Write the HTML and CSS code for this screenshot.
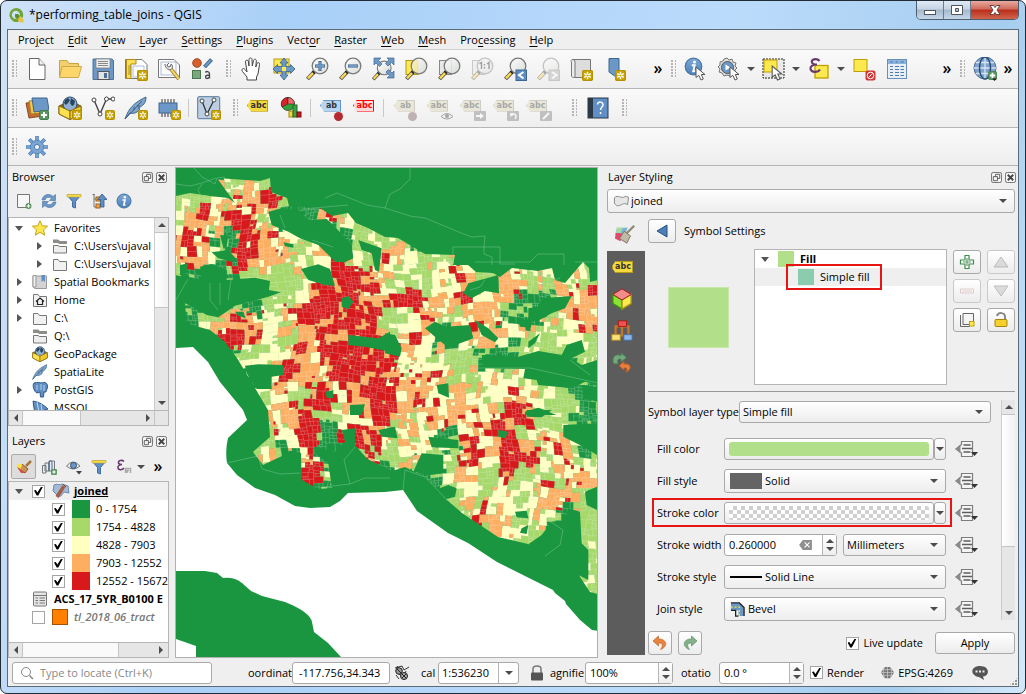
FILE: index.html
```html
<!DOCTYPE html>
<html lang="en">
<head>
<meta charset="utf-8">
<title>*performing_table_joins - QGIS</title>
<link rel="stylesheet" href="styles.css">
</head>
<body>
<svg class="defs" aria-hidden="true">
  <defs>
    <linearGradient id="lens" x1="0" y1="0" x2="1" y2="1"><stop offset="0" stop-color="#fff"/><stop offset="1" stop-color="#d3d7d0"/></linearGradient>
    <linearGradient id="blue" x1="0" y1="0" x2="0" y2="1"><stop offset="0" stop-color="#7fa9d6"/><stop offset="1" stop-color="#4a7fb8"/></linearGradient>
    <symbol id="i-new" viewBox="0 0 10 10"><rect x=".5" y=".5" width="9" height="9" rx="1" fill="#c8a300" stroke="#b39100"/><path d="M5 1.500V8.500M2 3.200 8 6.800M8 3.200 2 6.800" stroke="#fff" stroke-width="1.300"/><circle cx="5" cy="5" r="1" fill="#c8a300"/></symbol>
    <symbol id="i-plus" viewBox="0 0 10 10"><rect x=".5" y=".5" width="9" height="9" rx="1.500" fill="#5a9461" stroke="#45804c"/><path d="M5 2V8M2 5H8" stroke="#fff" stroke-width="2"/></symbol>
    <symbol id="i-mag" viewBox="0 0 24 24"><path d="M9.500 14.500 2.500 22" stroke="#4c4c4c" stroke-width="4"/><path d="M9 15 3 21.300" stroke="#fcd94f" stroke-width="2.400"/><path d="M9.500 14.500 8 16" stroke="#222" stroke-width="3.500"/><circle cx="15" cy="9" r="7.800" fill="url(#lens)" fill-opacity=".85" stroke="#7a7a7a" stroke-width="1.300"/></symbol>
    <symbol id="i-cursor" viewBox="0 0 12 15"><path d="M1 1V11.500L3.800 9.300 6 14 8.300 13 6.300 8.500H10Z" fill="#fff" stroke="#555"/></symbol>
    <symbol id="i-funnel" viewBox="0 0 16 16"><path d="M1 2H15L9.500 8.500V15L6.500 14V8.500Z" fill="#5f8fc4" stroke="#416f9f"/><path d="M1 1.500H15V4H1Z" fill="#f8dc4a" stroke="#c8a832" stroke-width=".6"/></symbol>
    <symbol id="i-info" viewBox="0 0 16 16"><circle cx="8" cy="8" r="7" fill="url(#blue)" stroke="#4674a3"/><circle cx="8.800" cy="4.200" r="1.300" fill="#fff"/><path d="M6.500 7H9L7.800 12H9.500" fill="none" stroke="#fff" stroke-width="1.600"/></symbol>
    <symbol id="i-folder" viewBox="0 0 16 16"><path d="M1.500 3.500V14.500H14.500V5.500H7.500L6 3.500Z" fill="#f1f1f1" stroke="#777"/></symbol>
    <symbol id="i-folder2" viewBox="0 0 16 16"><path d="M1.500 7.500V15H14.500V8.500H7.500L6 7.500Z" fill="#eee" stroke="#777"/><path d="M1 1.500H6L8 3H15V6H7L6 5H1Z" fill="#8c8c88"/></symbol>
    <symbol id="i-globox" viewBox="0 0 24 24"><path d="M1 10 12 5 23 10V18L12 23.500 1 18Z" fill="#8f7312" stroke="#6d560c"/><circle cx="12" cy="8" r="7" fill="#8fb0d2" stroke="#294969"/><path d="M7 4 10 2 12 4 10 7 8 9 6 7ZM13 2 17 5 16 9 14 10 12 7Z" fill="#29445f"/><path d="M1 10 12 15V23.500L1 18Z" fill="#fbe04f" stroke="#8a6c12"/><path d="M12 15V23.500L23 18V10Z" fill="#f0c92c" stroke="#8a6c12"/></symbol>
    <symbol id="i-feather" viewBox="0 0 24 24"><path d="M1 23C4 15 7 8 22 1 22 7 19 10 14 12 19 12 12 19 6 17Z" fill="#7fa5cc" stroke="#3d658d"/><path d="M1 23 18 5M10 11 10 14M13 10H16" fill="none" stroke="#2d4b69" stroke-width=".8"/></symbol>
    <symbol id="i-float" viewBox="0 0 12 12"><rect x=".5" y=".5" width="11" height="11" rx="2" fill="#f5f5f5" stroke="#666"/><path d="M5 5V2.500H9.500V7H7M2.500 5H7V9.500H2.500Z" fill="none" stroke="#555"/></symbol>
    <symbol id="i-close" viewBox="0 0 12 12"><rect x=".5" y=".5" width="11" height="11" rx="2" fill="#f5f5f5" stroke="#666"/><path d="M3 3 9 9M9 3 3 9" stroke="#444" stroke-width="2"/></symbol>
    <symbol id="i-dd" viewBox="0 0 24 18"><path d="M6.500 1.500H17.500V16.500H6.500V13L1 9 6.500 4.500Z" fill="#f5f5f5" stroke="#7d7d7d" stroke-width="1.200"/><path d="M5.500 4.500V13.500L.5 9Z" fill="#8b8b8b"/><path d="M8.500 5H15.500M7 8.500H17M8.500 12H15.500" stroke="#5d5d5d" stroke-width="1.300"/><path d="M16 12H23L19.500 16Z" fill="#333"/></symbol>
    <symbol id="i-undo" viewBox="0 0 16 16"><path d="M6.500 1 1 6 6.500 11V8C11 7.500 11.500 11 8.500 14.500 16 12 15.500 4 6.500 4Z" fill="#e8823c" stroke="#c06529" stroke-width=".7"/></symbol>
  </defs>
</svg>

<div class="window">
  <header class="titlebar">
    <svg class="s16" viewBox="0 0 16 16"><path d="M8 1A7 7 0 1 0 11 14.500L9.500 11.500A4 4 0 1 1 11.700 9L14.500 11A7 7 0 0 0 8 1Z" fill="#6fa637"/><path d="M7 7H10L15.500 12.500V15.500H12.500L7 10Z" fill="#e6c13a"/><path d="M7 7H10L12 9 9.500 12.500 7 10Z" fill="#5a9132"/></svg>
    <h1>*performing_table_joins - QGIS</h1>
    <div class="winbtns">
      <button aria-label="Minimize"><svg viewBox="0 0 14 12"><rect x="1.500" y="6.500" width="11" height="4" fill="#fff" stroke="#50555e"/></svg></button>
      <button aria-label="Maximize"><svg viewBox="0 0 14 12"><path d="M1.500 1.500H12.500V10.500H1.500ZM5.500 4.500H8.500V7.500H5.500Z" fill="#fff" fill-rule="evenodd" stroke="#50555e"/></svg></button>
      <button class="close" aria-label="Close"><svg viewBox="0 0 14 12"><path d="M2 1.500H5.500L7 3.500 8.500 1.500H12L9 6 12 10.500H8.500L7 8.500 5.500 10.500H2L5 6Z" fill="#fff" stroke="#5e4444"/></svg></button>
    </div>
  </header>

  <div class="client">
    <nav class="menubar">
      <button>Pro<u>j</u>ect</button><button><u>E</u>dit</button><button><u>V</u>iew</button><button><u>L</u>ayer</button><button><u>S</u>ettings</button><button><u>P</u>lugins</button><button>Vect<u>o</u>r</button><button><u>R</u>aster</button><button><u>W</u>eb</button><button><u>M</u>esh</button><button>Pro<u>c</u>essing</button><button><u>H</u>elp</button>
    </nav>

    <div class="toolbar">
      <i class="grip"></i>
      <button aria-label="New project"><svg viewBox="0 0 24 24"><path d="M4.500 1.500H14L20 8V22.500H4.500Z" fill="#fff" stroke="#666"/><path d="M14 1.500V8H20" fill="#eee" stroke="#666"/></svg></button>
      <button aria-label="Open project"><svg viewBox="0 0 24 24"><path d="M1.500 20V3.500H9L11 6.500H20.500V9" fill="#f2d06b" stroke="#c9a443"/><path d="M1.500 20.500 4 9.500H23.500L20.500 20.500Z" fill="#fcd66c" stroke="#cfa84a"/></svg></button>
      <button aria-label="Save project"><svg viewBox="0 0 24 24"><path d="M2 2H21L22.500 3.500V22.500H2Z" fill="#6c98c8" stroke="#49719c"/><rect x="5" y="2" width="14" height="9" fill="#eee" stroke="#777" stroke-width=".7"/><path d="M7 4.500H17M7 6.500H17M7 8.500H17" stroke="#888"/><rect x="7" y="14.500" width="11" height="8" fill="#e3e3e3" stroke="#555"/><rect x="13" y="16" width="3" height="5" fill="#496f9a"/></svg></button>
      <button aria-label="New print layout"><svg viewBox="0 0 24 24"><path d="M1.500 2.500H18L23 7.500V21.500H1.500Z" fill="#fff" stroke="#777"/><path d="M2.500 2.500H12V7H7V21.500H2.500Z" fill="#f8dd57" stroke="#b18b16"/><path d="M4 9H7M4 11H7M4 13H7M4 15H7M4 17H7" stroke="#8a6d0c" stroke-width=".7"/><path d="M9 9H20V20H9Z" fill="#fff" stroke="#99aad0" stroke-width=".8"/><use href="#i-new" x="13" y="13" width="11" height="11"/></svg></button>
      <button aria-label="Layout manager"><svg viewBox="0 0 24 24"><path d="M1.500 2.500H17L22.500 8V20.500H1.500Z" fill="#fff" stroke="#777"/><rect x="4" y="5" width="15" height="13" fill="#f9fbff" stroke="#9eabc8" stroke-width=".8"/><path d="M13 11 22 22" stroke="#9a7a2a" stroke-width="3.600"/><path d="M13 11 22 22" stroke="#f2d469" stroke-width="2"/><path d="M8 7C8 10 10 13 13.500 12.500 16 12 16 8 14 7L13.500 9.500 11 10 10 8 12 6" fill="#eee" stroke="#666"/></svg></button>
      <button aria-label="Style manager"><svg viewBox="0 0 24 24"><circle cx="7" cy="6" r="4.300" fill="#d75f2d" stroke="#a44920"/><path d="M14.500 10 21.500 2.500" stroke="#41658a" stroke-width="4"/><path d="M15 9.500 21 3" stroke="#6c98c8" stroke-width="2"/><rect x="2.500" y="13.500" width="8" height="8" fill="#7ba77d" stroke="#4a754d"/><path d="M15.500 15.500C16 14 19.500 14 19.500 17V21.500M19.500 18C16 18 15.500 19 15.500 20 15.500 22 18 22 19.500 20" fill="none" stroke="#444" stroke-width="1.300"/></svg></button>
      <i class="grip mid"></i>
      <button aria-label="Pan"><svg viewBox="0 0 24 24"><path d="M8 23V20L3.500 14.500C2 12 4.500 10.500 6 12.500L8 15 6.500 5C6 3 9 2.500 9.300 4.500L10 9 10 2.500C10 .5 13 .5 13 2.500L13.300 9 14.500 3.500C15 1.500 17.500 2 17.300 4L16.800 10 18 6.500C19 5 21 5.500 20.500 7.500L19 17 17.500 20V23Z" fill="#fff" stroke="#444"/></svg></button>
      <button aria-label="Pan to selection"><svg viewBox="0 0 24 24"><rect x="2" y="2" width="15" height="14" fill="#fce94f" stroke="#b39a12"/><path d="M12 1 16 6H14V9.500H18.500V7.500L23 12 18.500 16.500V14.500H14V18H16L12 23 8 18H10V14.500H5.500V16.500L1 12 5.500 7.500V9.500H10V6H8Z" fill="#6c98c8" stroke="#365f89" stroke-width=".8"/><rect x="10" y="10" width="4" height="4" fill="#fce94f"/></svg></button>
      <button aria-label="Zoom in"><svg viewBox="0 0 24 24"><use href="#i-mag"/><path d="M15 4V14M10 9H20" stroke="#31557a" stroke-width="3"/><path d="M15 4.500V13.500M10.500 9H19.500" stroke="#6d9acb" stroke-width="1.800"/></svg></button>
      <button aria-label="Zoom out"><svg viewBox="0 0 24 24"><use href="#i-mag"/><path d="M10 9H20" stroke="#31557a" stroke-width="3"/><path d="M10.500 9H19.500" stroke="#6d9acb" stroke-width="1.800"/></svg></button>
      <button aria-label="Zoom full"><svg viewBox="0 0 24 24"><g transform="translate(0 3) scale(.88)"><use href="#i-mag" width="24" height="24"/></g><path d="M3 1H10L7.500 3.500 11 7 8.500 9.500 5 6 3 8ZM16 1H23V8L20.500 5.500 17 9 14.500 6.500 18 3ZM23 14V21H16L18.500 18.500 15 15 17.500 12.500 21 16Z" fill="#6c98c8" stroke="#3f678f" stroke-width=".7"/></svg></button>
      <button aria-label="Zoom to selection"><svg viewBox="0 0 24 24"><rect x="2" y="3.500" width="12" height="14" fill="#fce94f" stroke="#b39a12"/><use href="#i-mag"/><path d="M9 5V14L14 16V3Z" fill="#fce94f" opacity=".35"/></svg></button>
      <button aria-label="Zoom to layer"><svg viewBox="0 0 24 24"><rect x="2.500" y="3.500" width="12" height="14" fill="#e8e8e8" stroke="#888"/><use href="#i-mag"/></svg></button>
      <button aria-label="Zoom to native resolution" disabled><svg viewBox="0 0 24 24"><rect x="2.500" y="3.500" width="12" height="14" fill="#e8e8e8" stroke="#888"/><use href="#i-mag"/><path d="M9.500 7 11.500 5.500V12M17 7 19 5.500V12M14.500 7V8.500M14.500 10V11.500" fill="none" stroke="#222" stroke-width="1.400"/></svg></button>
      <button aria-label="Zoom last"><svg viewBox="0 0 24 24"><use href="#i-mag"/><rect x="13" y="13" width="10.500" height="10.500" fill="#5d8cc0" stroke="#3b6795"/><path d="M20.500 15 16 18 20.500 21.500" fill="none" stroke="#fff" stroke-width="2"/></svg></button>
      <button aria-label="Zoom next" disabled><svg viewBox="0 0 24 24"><use href="#i-mag"/><rect x="13" y="13" width="10.500" height="10.500" fill="#aaa" stroke="#888"/><path d="M16 15 20.500 18 16 21.500" fill="none" stroke="#fff" stroke-width="2"/></svg></button>
      <button aria-label="New map view"><svg viewBox="0 0 24 24"><path d="M5 2.500H21.500V20.500H5Z" fill="#ddd" stroke="#777"/><path d="M5 2.500C2 2 1.500 4 2.500 5V19C3 21 6 21 6 19V5C6 3 5 2.500 3.500 3" fill="#eee" stroke="#777"/><use href="#i-new" x="13" y="13" width="11" height="11"/></svg></button>
      <button class="push" aria-label="New bookmark"><svg viewBox="0 0 24 24"><path d="M3 1.500H13V22L8 18.500 3 15Z" fill="#6c98c8" stroke="#3f678f"/><use href="#i-new" x="9" y="13" width="11" height="11"/></svg></button>
      <button class="more" aria-label="More">»</button>
      <i class="grip sec"></i>
      <button aria-label="Identify"><svg viewBox="0 0 24 24"><use href="#i-info" x="0" y="0" width="19" height="19"/><use href="#i-cursor" x="11" y="9" width="12" height="15"/></svg></button>
      <button aria-label="Run action"><svg viewBox="0 0 24 24"><path d="M10 1 12 3 15 2 16 5 19 6 18 9 20 11 18 13 18 16 15 17 13 19 10 18 7 19 5 16 2 15 3 12 1 10 3 8 3 5 6 4 7 2Z" fill="#ddd" stroke="#777"/><circle cx="10.500" cy="10.500" r="6" fill="#6c98c8" stroke="#555"/><path d="M8.500 7.500 13.500 10.500 8.500 13.500Z" fill="#fff"/><use href="#i-cursor" x="12" y="9" width="12" height="15"/></svg></button>
      <b class="tri"></b>
      <button aria-label="Select features"><svg viewBox="0 0 24 24"><rect x="1" y="2" width="21" height="19" fill="#ddd" fill-opacity=".5" stroke="#222" stroke-dasharray="2 1"/><rect x="2" y="3" width="13" height="12" fill="#fce94f" stroke="#c0a000"/><use href="#i-cursor" x="9" y="8" width="13" height="16"/></svg></button>
      <b class="tri"></b>
      <button aria-label="Select by expression"><svg viewBox="0 0 24 24"><rect x="8" y="8.500" width="13" height="12.500" fill="#fce94f" stroke="#c0a000" stroke-width="1.300"/><path d="M12.500 4C10 1 3.500 2 5 5.500 5.500 7 8 7.500 10 7.500 6 7.500 3 9 3.500 12 4.500 16 11 15.500 13 12.500" fill="none" stroke="#6a376e" stroke-width="2.200"/></svg></button>
      <b class="tri"></b>
      <button aria-label="Deselect"><svg viewBox="0 0 24 24"><rect x="2" y="2.500" width="13" height="12" fill="#fce94f" stroke="#c0a000"/><rect x="13.500" y="13.500" width="10" height="10" rx="2" fill="#d73636"/><circle cx="18.500" cy="18.500" r="3.300" fill="none" stroke="#fff"/><path d="M16.500 20.500 20.500 16.500" stroke="#fff"/></svg></button>
      <button aria-label="Attribute table"><svg viewBox="0 0 24 24"><rect x="2.500" y="2.500" width="19" height="19" fill="#e9eff6" stroke="#6590bd"/><path d="M3 3H21V7H3Z" fill="#8fb4dc"/><path d="M5 5H8M10.500 5H13M15.500 5H19M5 9.500H8M10 9.500H14M15.500 9.500H19M5 12.500H8M10 12.500H14M15.500 12.500H19M5 15.500H8M10 15.500H14M15.500 15.500H19M5 18.500H8M10 18.500H14M15.500 18.500H19" stroke="#4d7bab"/></svg></button>
      <button class="more far" aria-label="More">»</button>
      <i class="grip sec"></i>
      <button aria-label="Add web layer"><svg viewBox="0 0 24 24"><circle cx="12" cy="11" r="11" fill="#7fa3cb" stroke="#4b7099"/><path d="M12 0V22M1 11H23M3 5.500H21M3 16.500H21" stroke="#d7e4f3" stroke-width="1.300"/><ellipse cx="12" cy="11" rx="5.500" ry="11" fill="none" stroke="#294e78" stroke-width="1.500"/><use href="#i-plus" x="15" y="14" width="9" height="9"/><path d="M19 21.500H24L21.500 24Z" fill="#222"/></svg></button>
      <button class="more edge" aria-label="More">»</button>
    </div>

    <div class="toolbar">
      <i class="grip"></i>
      <button aria-label="Data source manager"><svg viewBox="0 0 24 24"><path d="M1 7 14 6 18 20 4 22Z" fill="#c26c33" stroke="#8a4a22"/><path d="M4 5 16 4 19 17 6 18Z" fill="#f2c64a" stroke="#a68018"/><path d="M7 2 22 2 24 14 9 16Z" fill="#6c98c8" stroke="#41658a"/><use href="#i-plus" x="14" y="14" width="10" height="10"/></svg></button>
      <button aria-label="New GeoPackage layer"><svg viewBox="0 0 24 24"><use href="#i-globox"/><use href="#i-new" x="14" y="14" width="10" height="10"/></svg></button>
      <button aria-label="New shapefile"><svg viewBox="0 0 24 24"><path d="M3 4 9 18 15.500 3 21 3" fill="none" stroke="#444" stroke-width="1.400"/><g fill="#fff" stroke="#444"><circle cx="3" cy="4" r="2"/><circle cx="9" cy="18" r="2"/><circle cx="15.500" cy="3" r="2"/><circle cx="22" cy="3" r="2"/></g><use href="#i-new" x="14" y="14" width="10" height="10"/></svg></button>
      <button aria-label="New SpatiaLite layer"><svg viewBox="0 0 24 24"><use href="#i-feather"/><use href="#i-new" x="14" y="14" width="10" height="10"/></svg></button>
      <button aria-label="New memory layer"><svg viewBox="0 0 24 24"><path d="M5 3V21M8 3V21M11 3V21M14 3V21M17 3V21" stroke="#333"/><rect x="2" y="7" width="18" height="10" fill="#6c98c8" stroke="#3e658e"/><use href="#i-new" x="14" y="14" width="10" height="10"/></svg></button>
      <i class="sep"></i>
      <button aria-label="New virtual layer"><svg viewBox="0 0 24 24"><rect x=".7" y=".7" width="22" height="22" rx="1" fill="#bccfe2" stroke="#56789b"/><path d="M5 5 10 18 17 4" fill="none" stroke="#333" stroke-width="1.300"/><g fill="#fff" stroke="#444"><circle cx="5" cy="5" r="2"/><circle cx="10" cy="18" r="2"/><circle cx="17" cy="4" r="2"/></g><use href="#i-new" x="14" y="14" width="10" height="10"/></svg></button>
      <i class="grip mid"></i>
      <button aria-label="Layer labeling options"><span class="tag">abc</span></button>
      <button aria-label="Diagram options"><svg viewBox="0 0 24 24"><circle cx="9" cy="8" r="6.500" fill="#31a33a" stroke="#222" stroke-width=".7"/><path d="M9 8V1.500A6.500 6.500 0 0 0 3 11Z" fill="#d8232a" stroke="#222" stroke-width=".5"/><path d="M9 8 15.500 8A6.500 6.500 0 0 0 9 1.500Z" fill="#f06a6a" stroke="#222" stroke-width=".5"/><rect x="10" y="15" width="4" height="6" fill="#f5d93a" stroke="#a78710"/><rect x="14" y="9" width="4" height="12" fill="#3ca441" stroke="#26692a"/><rect x="18" y="16" width="4" height="5" fill="#bf1a1e" stroke="#7d0d10"/></svg></button>
      <i class="sep"></i>
      <button aria-label="Highlight pinned labels"><span class="tag blue pin">ab</span></button>
      <button aria-label="Toggle unplaced labels"><span class="tag red">abc</span></button>
      <i class="sep wide"></i>
      <button aria-label="Pin labels" disabled><span class="tag gray pin">ab</span></button>
      <button aria-label="Show or hide labels" disabled><span class="tag gray">abc</span><svg class="mini" viewBox="0 0 12 9"><path d="M0 5Q6-1 12 5 6 10 0 5Z" fill="#eee" stroke="#333"/><circle cx="6" cy="4.500" r="2" fill="#333"/></svg></button>
      <button aria-label="Move label" disabled><span class="tag gray">abc</span><svg class="mini" viewBox="0 0 12 10"><rect width="12" height="10" rx="1" fill="#777"/><path d="M2 4H6V2L10 5 6 8V6H2Z" fill="#fff"/></svg></button>
      <button aria-label="Rotate label" disabled><span class="tag gray">abc</span><svg class="mini" viewBox="0 0 12 10"><rect width="12" height="10" rx="1" fill="#777"/><path d="M8 8C11 4 6 1 4 4V2M4 4H6" fill="none" stroke="#fff" stroke-width="1.500"/></svg></button>
      <button aria-label="Change label" disabled><span class="tag gray">abc</span><svg class="mini" viewBox="0 0 12 10"><rect width="12" height="10" rx="1" fill="#777"/><path d="M3 8 9 2" stroke="#fff" stroke-width="2"/></svg></button>
      <i class="grip help"></i>
      <button aria-label="Help"><svg viewBox="0 0 24 24"><rect x="2" y="2" width="20" height="20" fill="#5f8fc4" stroke="#2b3946"/><rect x="2" y="2" width="5" height="20" fill="#2b3946"/><path d="M11.500 8.500C11.500 5 17.500 5.500 17 9 17 11 14.500 11 14.500 14M14.500 16V18" fill="none" stroke="#fff" stroke-width="1.500"/></svg></button>
      <i class="grip mid"></i>
    </div>

    <div class="toolbar last">
      <i class="grip"></i>
      <button aria-label="Processing toolbox"><svg viewBox="0 0 24 24"><g stroke="#4a7fb8" stroke-width="3.600"><path d="M12 1V23M1 12H23M4.200 4.200 19.800 19.800M19.800 4.200 4.200 19.800"/></g><g stroke="#7ba4d2" stroke-width="2"><path d="M12 1.500V22.500M1.500 12H22.500M4.600 4.600 19.400 19.400M19.400 4.600 4.600 19.400"/></g><circle cx="12" cy="12" r="6.700" fill="#7ba4d2" stroke="#5687bd"/><circle cx="12" cy="12" r="2.600" fill="#f2f2f2" stroke="#4a7fb8"/></svg></button>
    </div>

    <main class="workspace">
      <div class="left">
        <section class="dock browser">
          <h2>Browser<span><button aria-label="Float browser"><svg><use href="#i-float"/></svg></button><button aria-label="Close browser"><svg><use href="#i-close"/></svg></button></span></h2>
          <div class="docktools">
            <button aria-label="Add layer"><svg viewBox="0 0 16 16"><path d="M10 14.500H1.500V1.500H13.500V10" fill="#f7f7f7" stroke="#777"/><circle cx="12.500" cy="13" r="3" fill="#5a9461"/><path d="M12.500 11.200V14.800M10.700 13H14.300" stroke="#fff"/></svg></button>
            <button aria-label="Refresh"><svg viewBox="0 0 16 16"><path d="M1 7C2 1 9 0 12 3.500L14.500 1.500V7.500H8.500L10.500 5.500C8 3.500 5 4 4 7ZM15 9C14 15 7 16 4 12.500L1.500 14.500V8.500H7.500L5.500 10.500C8 12.500 11 12 12 9Z" fill="#6c98c8" stroke="#44719f" stroke-width=".6"/></svg></button>
            <button aria-label="Filter browser"><svg><use href="#i-funnel"/></svg></button>
            <button aria-label="Collapse all"><svg viewBox="0 0 16 16"><path d="M1.500 1.500H4M3 2V14H6M3 6H6" fill="none" stroke="#777"/><rect x="5" y="4" width="4" height="4" fill="#f4a64b" stroke="#a85f14"/><rect x="5" y="11" width="4" height="4" fill="#f4a64b" stroke="#a85f14"/><path d="M11 1 16 6.500H13V14H9.500V6.500H6.500Z" fill="#5f8fc4" stroke="#315b86" stroke-width=".8"/></svg></button>
            <button aria-label="Properties"><svg><use href="#i-info"/></svg></button>
          </div>
          <div class="tree">
            <div class="treebody">
              <ul>
                <li><b class="ex open"></b><svg viewBox="0 0 16 16"><path d="M8 .8 10.200 5.700 15.600 6.200 11.500 9.800 12.700 15.200 8 12.300 3.300 15.200 4.500 9.800.4 6.200 5.800 5.700Z" fill="#fde64e" stroke="#c2a41c"/></svg>Favorites</li>
                <li class="l2"><b class="ex"></b><svg><use href="#i-folder2"/></svg>C:\Users\ujaval</li>
                <li class="l2"><b class="ex"></b><svg><use href="#i-folder"/></svg>C:\Users\ujaval</li>
                <li><b class="ex"></b><svg viewBox="0 0 16 16"><path d="M1 2H14.500V14.500H3L1 13Z" fill="#d3d3d3" stroke="#999"/><path d="M1 1.500H4V13H1Z" fill="#eee" stroke="#999"/><path d="M9.500 1H13V8L11 6.500 9.500 8Z" fill="#5f8fc4"/></svg>Spatial Bookmarks</li>
                <li><b class="ex"></b><svg viewBox="0 0 16 16"><path d="M1.500 2.500V14.500H14.500V4.500H7.500L6 2.500Z" fill="#f1f1f1" stroke="#777"/><path d="M4 9.500 8 6 12 9.500M5.500 9V12.500H10.500V9" fill="none" stroke="#222" stroke-width="1.200"/></svg>Home</li>
                <li><b class="ex"></b><svg><use href="#i-folder"/></svg>C:\</li>
                <li><b class="ex none"></b><svg><use href="#i-folder2"/></svg>Q:\</li>
                <li><b class="ex none"></b><svg><use href="#i-globox"/></svg>GeoPackage</li>
                <li><b class="ex none"></b><svg><use href="#i-feather"/></svg>SpatiaLite</li>
                <li><b class="ex"></b><svg viewBox="0 0 16 16"><path d="M2 1C6-.5 8 1 9 1 13-.5 16 1 15.500 5 15 8 14 9 14 10L12 10 11.500 15H8.500L8 10 5 11C2 10 0 3 2 1Z" fill="#5f8fc4" stroke="#315b86"/><path d="M5 3V8M9 2V8M12 9V3" fill="none" stroke="#b7cde4"/></svg>PostGIS</li>
                <li><b class="ex none"></b><svg viewBox="0 0 16 16"><path d="M1 1C7 2 12 5 16 9L7 12 3 15Z" fill="#5f8fc4" stroke="#315b86"/><path d="M5 2 7 12M9 4 10 11" stroke="#c6d9ee"/></svg>MSSQL</li>
              </ul>
              <div class="vbar"><b class="tri up"></b><i></i><b class="tri"></b></div>
            </div>
            <div class="hbar"><b class="tri lt"></b><i></i><b class="tri rt"></b><em></em></div>
          </div>
        </section>
        <section class="dock layers">
          <h2>Layers<span><button aria-label="Float layers"><svg><use href="#i-float"/></svg></button><button aria-label="Close layers"><svg><use href="#i-close"/></svg></button></span></h2>
          <div class="docktools">
            <button class="on" aria-label="Layer styling"><svg viewBox="0 0 16 16"><path d="M10 7 15 2" stroke="#a8753a" stroke-width="2.500"/><path d="M6 5 12 10 9 14 2 9Z" fill="#c99152" stroke="#8a5c28"/><path d="M1 5 6 5 5 10 1 8Z" fill="#fbe24c"/><path d="M1 8 9 14 5 14Z" fill="#e04848"/></svg></button>
            <button aria-label="Add group"><svg viewBox="0 0 16 16"><path d="M1.500 6.500H5V14H1.500ZM4 4H8V12H4ZM8 2H13.500V12H8Z" fill="#e7edf3" stroke="#777"/><path d="M8 12V4C8 1 11 1 11 4V10" fill="none" stroke="#3f678f"/><use href="#i-plus" x="10" y="10" width="6" height="6"/></svg></button>
            <button aria-label="Map themes"><svg viewBox="0 0 16 16"><path d="M.5 7Q7-1 14 7 7 13 .5 7Z" fill="#eee" stroke="#777"/><circle cx="7.500" cy="6.500" r="3" fill="#6c98c8" stroke="#304f6f"/><path d="M10 12H16L13 15.500Z" fill="#444"/></svg></button>
            <button aria-label="Filter legend"><svg><use href="#i-funnel"/></svg></button>
            <button aria-label="Filter by expression"><svg viewBox="0 0 16 16"><path d="M8 2.500C6 .5 2 1.500 2.500 4 3 5.500 4.500 5.500 6 5.500 3.500 5.500 1.500 7 2 9 2.500 11.500 6.500 11 8 9" fill="none" stroke="#6a376e" stroke-width="1.600"/><path d="M9.500 14V9.500H14.500V14M11 14V11.500H13" fill="none" stroke="#aaa" stroke-width="1.500"/></svg></button>
            <b class="tri"></b>
            <button class="more" aria-label="More">»</button>
          </div>
          <div class="tree">
            <div class="treebody">
              <ul>
                <li class="sel"><b class="ex open"></b><label><input type="checkbox" checked><svg viewBox="0 0 18 16"><path d="M2 2C5 0 8 3 10 1L16 3 17 10 12 9C9 12 10 15 5 12L1 8Z" fill="#a3bbd7" stroke="#6b8bb0"/><path d="M5 14 12 3" stroke="#a25e45" stroke-width="3.500"/><path d="M11 1 14 4" stroke="#7d4431"/></svg><strong>joined</strong></label></li>
                <li class="cls"><label><input type="checkbox" checked><i class="sw c0"></i>0 - 1754</label></li>
                <li class="cls"><label><input type="checkbox" checked><i class="sw c1"></i>1754 - 4828</label></li>
                <li class="cls"><label><input type="checkbox" checked><i class="sw c2"></i>4828 - 7903</label></li>
                <li class="cls"><label><input type="checkbox" checked><i class="sw c3"></i>7903 - 12552</label></li>
                <li class="cls"><label><input type="checkbox" checked><i class="sw c4"></i>12552 - 156727</label></li>
                <li><b class="ex none"></b><svg viewBox="0 0 16 16"><rect x="1.500" y="1" width="13" height="14" rx="1" fill="#e5e5e5" stroke="#777"/><path d="M2 4.500H14M3.500 7H6M7.500 7H13M3.500 9.500H6M7.500 9.500H13M3.500 12H6M7.500 12H13" stroke="#777"/></svg><span class="bold">ACS_17_5YR_B0100 E</span></li>
                <li class="off"><b class="ex none"></b><label><input type="checkbox"><i class="sw c5"></i>tl_2018_06_tract</label></li>
              </ul>
            </div>
            <div class="hbar end"><b class="tri lt"></b><i></i><b class="tri rt"></b></div>
          </div>
        </section>
      </div>

      <div class="canvas">
        <svg id="map" viewBox="176 168 421 489" preserveAspectRatio="xMidYMid slice" role="img" aria-label="Map of joined layer">
          <defs><clipPath id="urban"><path d="M176 196 190 193 210 196 228 198 235 203 217 178 260 181 270 178 271 192 287 198 289 206 320 208 332 216 348 213 356 223 368 228 385 237 398 238 413 247 425 254 455 255 453 265 468 265 476 272 493 273 500 277 512 268 538 271 552 268 555 280 565 283 583 262 589 268 590 282 598 280V594L590 592 582 580 573 566 563 567 555 556 528 544 498 537 462 513 447 500 425 477 405 467 392 471 365 458 350 457 335 470 332 488 318 489 302 480 298 462 284 455 263 465 253 452 270 437 268 410 255 388 237 358 225 342 210 330 185 323 176 300Z"/></clipPath></defs>
          <path class="d" d="M176 168H598V631L592 630 580 620 566 604 565 601 555 593 553 590 497 562 468 543 448 533 417 511 403 490 385 492 348 493 340 501 330 507 310 508 295 506 275 495 255 488 237 475 227 463Q225 450 228 438L247 420 243 410 220 382 208 362 193 347 176 348Z"/>
          <path class="d" d="M176 571 205 571 217 573 223 578 Q235 577 242 583L251 591 262 596 285 602 Q310 612 312 622 L314 632 328 643 341 657H196V646L176 639Z"/>
          <g id="tracts" clip-path="url(#urban)"></g>
          <g class="d" transform="translate(175 165) scale(.33333)">
            <path d="M0 330 60 342 155 345 240 338 285 348 282 375 318 382 280 395 245 405 180 422 130 457 95 450 60 430 30 415 35 475 0 482ZM280 140 320 130 370 135 400 165 455 162 475 180 530 240 535 280 510 292 480 290 430 240 375 220 340 200 290 180ZM378 312 430 298 465 312 480 362 450 360 400 345ZM135 210 160 212 155 245 145 248ZM110 262 160 255 182 280 175 292 130 280ZM75 305 110 297 155 315 155 345 80 345ZM550 225 620 250 612 320 600 315 590 265 560 255ZM500 400 520 393 535 410 520 432 500 425ZM210 602 250 598 325 600 325 630 290 635 290 672 245 672 215 625ZM520 510 610 520 645 500 645 560 570 545 520 540ZM180 440 205 440 212 460 190 452ZM525 720 570 718 560 750 525 750ZM452 680 475 675 475 700 455 698ZM325 232 355 238 355 248 330 244ZM15 300 40 295 30 335 15 330Z"/>
          </g>
          <g class="d" transform="translate(385 165) scale(.33333)">
            <path d="M250 355 340 330 342 385 300 378 260 400 235 385ZM430 430 460 425 470 400 560 393 540 430 500 445 455 470 430 460ZM120 490 150 470 185 485 255 480 265 520 190 548 155 520ZM290 570 400 575 460 558 545 572 590 600 636 585 636 660 600 650 560 670 460 660 455 645 415 640 420 612 295 610ZM545 540 590 525 600 560 560 580 530 570ZM0 505 30 510 50 550 45 575 0 565ZM590 660 636 665 636 710 595 700ZM155 660 190 655 192 698 160 685ZM420 740 460 728 515 750H420ZM270 465 310 490 340 520 330 532 290 510ZM400 470 440 460 438 488 405 485ZM430 530 465 505 450 535 430 550Z"/>
          </g>
          <g class="d" transform="translate(175 410) scale(.33333)">
            <path d="M500 60 540 55 540 105 575 145 590 195 550 205 470 230 460 160 420 130 420 110 480 125 510 95ZM310 150 345 122 378 130 380 200 310 185 260 180ZM760 80 850 90 850 115 770 112ZM740 130 805 135 805 190 760 195 715 185ZM610 60 660 50 668 85 620 80ZM1165 45 1266 40V135L1225 110 1165 80ZM1130 335 1170 330 1180 295 1215 305 1220 400 1240 420 1240 510 1160 470 1060 403 1100 375ZM1040 355 1060 345 1055 372 1035 368ZM1055 0 1130 0 1100 22 1055 20ZM1230 245 1266 230V300L1235 285ZM970 60 1000 65 990 85 970 80ZM820 225 845 235 840 260 805 270 780 240ZM1020 305 1055 302 1060 325 1025 322Z"/>
          </g>
          <g class="line">
            <path d="M194 168 202 177 215 184 217 178 225 177M176 184 190 186 202 183 216 178M202 184 198 190 201 196M410 168V179L400 189 390 194 385 208 410 216 425 218 442 225 461 233 472 237 485 236 484 247M385 208 367 205 337 193 325 198M453 247H500V264H515M453 247V262M484 247V254L492 257V265M538 254H564V265M598 262H575M475 262H530L538 254M348 205 303 209M176 300 188 279M210 283V300L218 310M220 283V305M228 300 231 280M280 215 285 228M227 463 258 456 262 469 280 474 300 473M324 487 350 484 365 478H390M403 490 405 470 425 477 447 500M350 484 344 460 355 447M455 368H530L598 383M415 345 400 335 395 322M545 556 560 545 563 530 548 520M312 240 333 247M470 290 480 287 485 280M540 285 560 278M570 360 590 375"/>
          </g>
        </svg>
      </div>

      <section class="dock styling">
        <h2>Layer Styling<span><button aria-label="Float layer styling"><svg><use href="#i-float"/></svg></button><button aria-label="Close layer styling"><svg><use href="#i-close"/></svg></button></span></h2>
        <div class="combo layer"><svg viewBox="0 0 18 16"><path d="M1.500 4C5 0 9 6 13 2.500L16.500 3.500 15.500 11.500C11 8 9 13 4 12.500L1.500 10Z" fill="#e6e6e6" stroke="#888"/></svg><select aria-label="Layer"><option>joined</option></select></div>
        <div class="cols">
          <div class="tabs">
            <button class="cur" aria-label="Symbology"><svg viewBox="0 0 24 24"><path d="M13 12 22 3" stroke="#8e8974" stroke-width="2.500"/><path d="M3 5H14L10 13H1Z" fill="#a8d8a6"/><path d="M2 11H11L7 20 1 17Z" fill="#e0496e"/><path d="M9 6 15 5 13 10 7 12Z" fill="#7fb0dc"/><path d="M11 9 18 14 14 22 6 17Z" fill="#c0baa5" stroke="#77725f"/></svg></button>
            <button aria-label="Labels"><span class="tag">abc</span></button>
            <button aria-label="3D view"><svg viewBox="0 0 24 24"><path d="M2 7 12 13V23L2 17Z" fill="#8ae234" stroke="#3f8d10" stroke-width="1.500"/><path d="M22 7 12 13V23L22 17Z" fill="#fce94f" stroke="#a78d10" stroke-width="1.500"/><path d="M12 1 22 7 12 13 2 7Z" fill="#f58c8c" stroke="#b01919"/></svg></button>
            <button aria-label="Diagrams"><svg viewBox="0 0 24 24"><path d="M5 17V7H19V17M12 7V18" fill="none" stroke="#c4762a" stroke-width="2.500"/><rect x="8" y="1" width="9" height="6" fill="#ef5350" stroke="#a81717"/><rect x="1" y="16" width="9" height="6" fill="#fce07a" stroke="#c09a20"/><rect x="14" y="16" width="9" height="6" fill="#8fb8ea" stroke="#3f6fa8"/></svg></button>
            <button aria-label="History"><svg viewBox="0 0 24 24"><path d="M3 13C0 6 5 1 11 4V1L17 6 11 11V8C8 7 6 9 8 13Z" fill="#73a77d" stroke="#4a7c54"/><path d="M14 10 9 15 14 20V17.500C18 17 18 19 16 22 23 20 23 12 14 13Z" fill="#e77e3c" stroke="#b85c22"/></svg></button>
          </div>
          <div class="panel">
            <div class="head"><button class="btn back" aria-label="Back"><svg viewBox="0 0 12 14"><path d="M11 1V13L1 7Z" fill="#4a7fb8" stroke="#28527c"/></svg></button><span>Symbol Settings</span></div>
            <div class="symbol">
              <div class="preview"><i></i></div>
              <ul class="symtree">
                <li><b class="ex open"></b><i class="fillsw"></i><strong>Fill</strong></li>
                <li class="cur"><span class="mark"><i class="simplesw"></i>Simple fill</span></li>
              </ul>
              <div class="symbtns">
                <button class="btn" aria-label="Add symbol layer"><svg viewBox="0 0 16 16"><path d="M6 1.500H10V6H14.500V10H10V14.500H6V10H1.500V6H6Z" fill="#fff" stroke="#3e8b4c" stroke-width="1.200"/><path d="M8 4V12M4 8H12" stroke="#5a9e66" stroke-width="1.200"/></svg></button>
                <button class="btn" aria-label="Move up" disabled><svg viewBox="0 0 16 16"><path d="M8 3 15 13H1Z" fill="#bbb" stroke="#777"/></svg></button>
                <button class="btn" aria-label="Remove symbol layer" disabled><svg viewBox="0 0 16 16"><path d="M1.500 6H14.500V10H1.500ZM3 8H13" fill="#fff" stroke="#c69a9a"/></svg></button>
                <button class="btn" aria-label="Move down" disabled><svg viewBox="0 0 16 16"><path d="M8 13 15 3H1Z" fill="#bbb" stroke="#777"/></svg></button>
                <button class="btn" aria-label="Duplicate"><svg viewBox="0 0 16 16"><path d="M1.500 3V14.500H11M4 1.500H14.500V12.500H4Z" fill="#f4f4f4" stroke="#666"/><rect x="10.500" y="9.500" width="4.500" height="4.500" fill="#fce94f" stroke="#c0a000"/></svg></button>
                <button class="btn" aria-label="Lock colour"><svg viewBox="0 0 16 16"><path d="M4 4C5 0 12 0 12 5V8" fill="none" stroke="#888" stroke-width="2"/><rect x="2" y="7.500" width="12" height="7" rx="1" fill="#f7d02e" stroke="#a98509"/></svg></button>
              </div>
            </div>
            <div class="formwrap">
              <form class="form">
                <div class="type"><label for="slt">Symbol layer type</label><div class="combo"><select id="slt"><option>Simple fill</option></select></div></div>
                <div class="row"><label for="fc">Fill color</label><div class="field color"><button type="button" id="fc"><i></i></button><button type="button" aria-label="Fill color menu"><b class="tri"></b></button></div><button type="button" class="dd" aria-label="Override fill color"><svg><use href="#i-dd"/></svg></button></div>
                <div class="row"><label for="fs">Fill style</label><div class="field combo"><i class="solid"></i><select id="fs"><option>Solid</option></select></div><button type="button" class="dd" aria-label="Override fill style"><svg><use href="#i-dd"/></svg></button></div>
                <div class="row marked"><label for="sc">Stroke color</label><div class="field color"><button type="button" id="sc"><i class="clear"></i></button><button type="button" aria-label="Stroke color menu"><b class="tri"></b></button></div><button type="button" class="dd" aria-label="Override stroke color"><svg><use href="#i-dd"/></svg></button></div>
                <div class="row"><label for="sw">Stroke width</label><div class="field pair"><div class="spin"><input id="sw" type="text" value="0.260000"><svg class="clr" viewBox="0 0 14 11"><path d="M0 5.500 4 0H14V11H4Z" fill="#8e8e8e"/><path d="M6 2.500 11.500 8M11.500 2.500 6 8" stroke="#fff" stroke-width="1.200"/></svg><span class="steps"><b class="tri up"></b><b class="tri"></b></span></div><div class="combo"><select aria-label="Stroke width unit"><option>Millimeters</option></select></div></div><button type="button" class="dd" aria-label="Override stroke width"><svg><use href="#i-dd"/></svg></button></div>
                <div class="row"><label for="ss">Stroke style</label><div class="field combo"><i class="solid ln"></i><select id="ss"><option>Solid Line</option></select></div><button type="button" class="dd" aria-label="Override stroke style"><svg><use href="#i-dd"/></svg></button></div>
                <div class="row"><label for="js">Join style</label><div class="field combo join"><svg viewBox="0 0 16 16"><path d="M1 1H10L15 6V15H9V9H1Z" fill="#6c98c8"/><path d="M1 1H10L15 6V15M1 9H6V15H9" fill="none" stroke="#222" stroke-width="1.400"/><path d="M1 5.500H10V15" fill="none" stroke="#f3e13e" stroke-width="1.500" stroke-dasharray="2 2"/></svg><select id="js"><option>Bevel</option></select></div><button type="button" class="dd" aria-label="Override join style"><svg><use href="#i-dd"/></svg></button></div>
              </form>
              <div class="vbar"><b class="tri up"></b><i></i><b class="tri"></b></div>
            </div>
            <div class="foot">
              <button class="btn sq" aria-label="Undo"><svg><use href="#i-undo"/></svg></button>
              <button class="btn sq redo" aria-label="Redo"><svg viewBox="0 0 16 16"><path d="M9.500 1 15 6 9.500 11V8C5 7.500 4.500 11 7.500 14.500 0 12 .5 4 9.500 4Z" fill="#84b08b" stroke="#59915f" stroke-width=".7"/></svg></button>
              <label><input type="checkbox" checked>Live update</label>
              <button class="btn apply">Apply</button>
            </div>
          </div>
        </div>
      </section>
    </main>

    <footer class="status">
      <div class="search"><svg viewBox="0 0 14 14"><circle cx="6" cy="6" r="4.500" fill="none" stroke="#888"/><path d="M9.500 9.500 13 13" stroke="#888" stroke-width="1.500"/></svg><input type="text" aria-label="Locator" placeholder="Type to locate (Ctrl+K)"></div>
      <label class="coord" for="co">oordinat</label><input id="co" type="text" value="-117.756,34.343">
      <svg class="s16 bug" viewBox="0 0 16 16"><path d="M1 3 8 1 10 5 15 2M2 10 5 14M2 7 12 14M12 6 9 14M3 1 6 6" stroke="#333" fill="none"/><circle cx="5" cy="6" r="3.300" fill="#999" stroke="#222"/><circle cx="10" cy="11" r="3.500" fill="#aaa" stroke="#222"/><path d="M3 4 7 8M8 9 12 13M12 9 8 13" stroke="#222"/></svg>
      <label class="scale" for="scl">cal</label><div class="scalebox"><input id="scl" type="text" value="1:536230"><button aria-label="Scale list"><b class="tri"></b></button></div>
      <svg class="s16 lock" viewBox="0 0 16 16"><path d="M4 8V4C4 0 12 0 12 4V8" fill="none" stroke="#777" stroke-width="1.500"/><rect x="2" y="7.500" width="12" height="8" rx="1" fill="#555"/></svg>
      <label class="mg" for="mag">agnifie</label><div class="spin w88"><input id="mag" type="text" value="100%"><span class="steps"><b class="tri up"></b><b class="tri"></b></span></div>
      <label class="rt" for="rot">otatio</label><div class="spin w84"><input id="rot" type="text" value="0.0 °"><span class="steps"><b class="tri up"></b><b class="tri"></b></span></div>
      <label class="render"><input type="checkbox" checked>Render</label>
      <button class="crs"><svg viewBox="0 0 16 16"><path d="M5 2H11L15 8 11 14H5L1 8Z" fill="#777"/><path d="M8 1V15M1 8H15M3 5H13M3 11H13M5 2C3 6 3 10 5 14M11 2C13 6 13 10 11 14" stroke="#ddd" fill="none" stroke-width=".6"/></svg>EPSG:4269</button>
      <button class="msg" aria-label="Messages"><svg viewBox="0 0 16 16"><path d="M8 1C18 1 18 11 11 11.500L12 15 7 12C-2 11-2 1 8 1Z" fill="#555"/><path d="M3.500 6.500H5.500M7 6.500H9M10.500 6.500H12.500" stroke="#eee" stroke-width="2"/></svg></button>
      <i class="corner"></i>
    </footer>
  </div>
</div>
<script src="tracts.js"></script>
</body>
</html>
```

FILE: styles.css
```css
* { box-sizing: border-box; }
html { background: #fff; }
body { margin: 0; font: 11px/18px "Open Sans", "Noto Sans", sans-serif; color: #000; }
button, input, select { font: inherit; color: inherit; margin: 0; padding: 0; border: 0; background: none; }
h1, h2, ul { margin: 0; padding: 0; font-weight: 400; list-style: none; }
i, em { font-style: normal; }
svg { display: block; flex: none; }
.defs { position: absolute; width: 0; height: 0; }
.s16 { width: 16px; height: 16px; flex: none; }

.window { height: 100vh; min-height: 600px; display: flex; flex-direction: column; padding: 0 6px 6px; border: 1px solid #222a33; border-radius: 7px; background: linear-gradient(100deg, #cfe2f7, #a9d0f8 25%, #bbdbfb 65%, #a5cdee 88%, #d3e8fb); overflow: hidden; }
.titlebar { height: 28px; flex: none; display: flex; align-items: center; gap: 5px; padding-left: 1px; }
.titlebar h1 { flex: 1; font-size: 12px; }
.winbtns { display: flex; align-self: flex-start; height: 19px; border: 1px solid #4f5d70; border-top: 0; border-radius: 0 0 5px 5px; overflow: hidden; }
.winbtns button { width: 27px; display: grid; place-items: center; background: linear-gradient(#dfeaf5, #c5d4e4 45%, #a5b9cd 50%, #c5d8ea); border-right: 1px solid #6b7a8e; }
.winbtns svg { width: 14px; height: 12px; }
.winbtns .close { width: 47px; border: 0; background: linear-gradient(#e8aba0, #d0695a 45%, #b92e1b 50%, #d0654d); }
.client { flex: 1; min-height: 0; display: flex; flex-direction: column; background: #efefef; border: 1px solid #5b6b78; }

.menubar { height: 20px; flex: none; display: flex; gap: 14px; padding-left: 10px; border-bottom: 1px solid #d0d0d0; }
.menubar u { text-underline-offset: 2px; }
.toolbar { height: 39px; flex: none; display: flex; align-items: center; background: linear-gradient(#fafafa, #eee); border-bottom: 1px solid #b5b5b5; overflow: hidden; }
.toolbar.last { height: 38px; }
.toolbar button { width: 33px; height: 32px; flex: none; display: grid; place-items: center; position: relative; }
.toolbar button > svg { width: 24px; height: 24px; }
.toolbar button:disabled { opacity: .4; }
.grip { flex: none; width: 5px; height: 18px; margin: 0 3px 0 4px; background: radial-gradient(circle at 1px 1px, #b5b5b5 1px, transparent 1px) 0 0 / 4px 3px; }
.grip.mid { margin: 0 3px 0 8px; }
.grip.sec { margin-left: 6px; }
.grip.help { margin: 0 4px 0 19px; }
.sep { flex: none; width: 1px; height: 18px; margin: 0 3px; background: #c9c9c9; }
.sep.wide { margin: 0 4px 0 3px; }
.toolbar .push { margin-left: 4px; }
.toolbar .more, .docktools .more { font-size: 16px; line-height: 16px; font-weight: 600; width: 14px; padding-bottom: 2px; }
.toolbar .more { margin-left: 17px; }
.toolbar .more.far { margin-left: 27px; }
.toolbar .more.edge { margin-left: 0; }
.tri { flex: none; width: 0; height: 0; border: 4px solid transparent; border-top-color: #4c4c4c; border-bottom: 0; }
.tri.up { border: 4px solid transparent; border-bottom-color: #4c4c4c; border-top: 0; }
.tri.lt { border: 4px solid transparent; border-right-color: #4c4c4c; border-left: 0; }
.tri.rt { border: 4px solid transparent; border-left-color: #4c4c4c; border-right: 0; }
.toolbar .tri { margin: 0 2px; }
.tag { position: relative; width: 21px; height: 12px; padding-left: 2px; font: bold 8px/9px "DejaVu Sans", sans-serif; text-align: center; color: #333; background: #f4d83f; border: 1px solid #b99a16; clip-path: polygon(4px 0, 100% 0, 100% 100%, 4px 100%, 0 50%); margin-bottom: 5px; }
.tag.blue { background: #b6d5f3; border-color: #6694c4; }
.tag.red { background: #ffd7d7; border-color: #f00; color: #f00; }
.tag.gray { background: #d7d3ad; border-color: #99947a; }
.toolbar button > .mini { position: absolute; width: 12px; height: 10px; right: 1px; bottom: 3px; }
.toolbar button:has(.pin)::after { content: ""; position: absolute; width: 9px; height: 9px; border-radius: 5px; right: 4px; bottom: 3px; background: #b52a31; }
.toolbar button:disabled:has(.pin)::after { background: #755; }

.workspace { flex: 1; min-height: 0; display: flex; }
.left { width: 161px; flex: none; display: flex; flex-direction: column; gap: 4px; }
.dock { display: flex; flex-direction: column; min-height: 0; }
.dock h2 { height: 22px; flex: none; display: flex; justify-content: space-between; align-items: center; font-size: 11px; padding: 0 2px 0 4px; }
.dock h2 span { display: flex; gap: 3px; }
.dock h2 svg { width: 11px; height: 11px; }
.browser { flex: 260; }
.layers { flex: 228; }
.docktools { height: 29px; flex: none; display: flex; align-items: center; padding-left: 3px; }
.browser .docktools { padding-bottom: 3px; }
.docktools button { width: 25px; height: 25px; display: grid; place-items: center; flex: none; }
.docktools svg { width: 16px; height: 16px; }
.docktools .on { background: #ddd; border: 1px solid #aaa; border-radius: 2px; }
.docktools .more { width: 20px; margin-left: 3px; }
.docktools .tri { margin-left: 1px; }
.tree { flex: 1; min-height: 0; display: flex; flex-direction: column; background: #fff; border: 1px solid #b5b5b5; }
.treebody { flex: 1; min-height: 0; display: flex; }
.tree ul { flex: 1; min-width: 0; overflow: hidden; }
.browser ul { padding-top: 1px; }
.tree li { height: 18px; display: flex; align-items: center; white-space: nowrap; }
.tree li > svg { width: 16px; height: 16px; margin-right: 6px; }
.ex { width: 0; height: 0; flex: none; border: 4px solid transparent; border-left: 5px solid #555; border-right: 0; margin: 0 10px 0 8px; }
.ex.open { border: 4px solid transparent; border-top: 5px solid #555; border-bottom: 0; margin: 0 9px 0 6px; }
.ex.none { border-left-color: transparent; }
.tree .l2 { padding-left: 20px; }
.vbar { width: 14px; flex: none; display: flex; flex-direction: column; align-items: center; background: #e6e6e6; border-left: 1px solid #ccc; padding: 5px 0; }
.vbar i { width: 100%; height: 76px; margin: 5px 0 auto; background: linear-gradient(90deg, #fff, #f2f2f2); border: 1px solid #c4c4c4; border-width: 1px 0; }
.hbar { height: 15px; flex: none; display: flex; align-items: center; background: #e6e6e6; border-top: 1px solid #b5b5b5; padding-left: 5px; }
.hbar i { width: 59px; flex: none; height: 100%; margin-left: 4px; background: #fafafa; border: 1px solid #c4c4c4; border-width: 0 1px; }
.hbar .rt { margin-left: auto; }
.hbar em { width: 14px; margin-left: 4px; height: 100%; border-left: 1px solid #c4c4c4; }
.hbar.end i { width: 97px; }
.hbar.end { padding-right: 5px; }
input[type="checkbox"] { appearance: none; width: 13px; height: 13px; flex: none; background: #fff; border: 1px solid #a5a5a5; display: grid; place-items: center; }
input[type="checkbox"]:checked::before { content: ""; width: 9px; height: 9px; background: #000; clip-path: polygon(0 45%, 20% 40%, 38% 68%, 80% 0, 100% 0, 48% 100%, 30% 100%); }
.layers label { display: flex; align-items: center; }
.layers .sel { background: #efefef; }
.sel svg { width: 18px; height: 16px; margin: 0 4px 0 7px; }
.sel strong { text-decoration: underline; }
.layers .cls { padding-left: 43px; }
.sw { width: 18px; height: 18px; margin: 0 6px 0 7px; flex: none; }
.c0 { background: #1a9641; } .c1 { background: #a6d96a; } .c2 { background: #ffffc0; } .c3 { background: #fdae61; } .c4 { background: #d7191c; }
.c5 { width: 16px; height: 16px; background: #ff7f00; border: 1px solid #a65300; }
.bold { font-weight: 700; }
.off { color: #777; font-style: italic; font-weight: 600; }

.canvas { flex: 1; min-width: 0; margin: 1px 9px 0 6px; border: 1px solid #b0b0b0; background: #fff; }
#map { width: 100%; height: 100%; }
#map .d { fill: #1a9641; }
#map .line { fill: none; stroke: #8fcfa0; stroke-opacity: .6; stroke-width: .7; }
.t1 { fill: #a6d96a; } .t2 { fill: #ffffc0; } .t3 { fill: #fdae61; } .t4 { fill: #d7191c; } .t0 { fill: #1a9641; }
#tracts path { stroke: #fff; stroke-opacity: .22; stroke-width: .5; }

.styling { width: 411px; flex: none; padding-right: 3px; }
.styling h2 { padding-left: 1px; margin-right: -3px; }
.combo { position: relative; display: flex; align-items: center; height: 24px; border: 1px solid #a9a9a9; border-radius: 3px; background: linear-gradient(#fff, #ededed); min-width: 0; }
.combo select { appearance: none; flex: 1; min-width: 0; height: 100%; padding: 0 22px 0 3px; outline: 0; }
.combo::after { content: ""; position: absolute; right: 7px; border: 4px solid transparent; border-top-color: #4c4c4c; border-bottom: 0; pointer-events: none; }
.layer { flex: none; margin-top: 1px; }
.layer svg { width: 17px; height: 15px; margin-left: 5px; }
.layer select { padding-left: 1px; }
.cols { flex: 1; min-height: 0; display: flex; gap: 3px; }
.tabs { width: 38px; flex: none; background: #5c5c5c; margin-bottom: 3px; }
.tabs button { width: 30px; height: 32px; display: grid; place-items: center; }
.tabs svg { width: 22px; height: 22px; }
.tabs .cur { width: 38px; height: 38px; background: #efefef; padding: 3px 2px 0 0; }
.tabs .tag { margin: 0; }
.panel { flex: 1; min-width: 0; display: flex; flex-direction: column; }
.btn { display: grid; place-items: center; border: 1px solid #a9a9a9; border-radius: 3px; background: linear-gradient(#fff, #ececec); width: 28px; height: 24px; }
.btn svg { width: 16px; height: 16px; }
.btn:disabled { border-color: #c9c9c9; }
.btn:disabled svg { opacity: .45; }
.head { display: flex; align-items: center; gap: 8px; padding-top: 6px; }
.head svg { width: 12px; height: 14px; }
.symbol { display: flex; gap: 6px; padding: 6px 0; border-bottom: 1px solid #999; }
.preview { width: 100px; flex: none; display: grid; place-items: center; }
.preview i { width: 61px; height: 61px; background: #b2df8a; border: 1px solid #c8e8a9; }
.symtree { flex: 1; height: 136px; background: #fff; border: 1px solid #b5b5b5; }
.symtree li { height: 18px; display: flex; align-items: center; }
.symtree .cur { background: #efefef; padding-left: 31px; }
.fillsw, .simplesw { width: 16px; height: 16px; background: #b2df8a; }
.fillsw { margin-right: 6px; }
.simplesw { background: #8bcbae; margin-right: 6px; }
.mark { display: flex; align-items: center; height: 26px; padding: 0 10px; border: 2px solid #e81515; position: relative; white-space: nowrap; }
.symbtns { flex: none; display: grid; grid-template-columns: 28px 28px; column-gap: 6px; row-gap: 5px; align-content: start; padding-top: 1px; }
.formwrap { flex: 1; min-height: 0; display: flex; gap: 10px; margin-top: 8px; }
.form { flex: 1; min-width: 0; }
.type { display: flex; align-items: center; padding-top: 1px; }
.type .combo { flex: 1; height: 22px; }
.type label { white-space: nowrap; }
.row:nth-child(2) { margin-top: 10px; }
.row { position: relative; display: flex; align-items: center; height: 32px; padding-left: 9px; }
.row label { width: 67px; flex: none; white-space: nowrap; }
.field { flex: 1; min-width: 0; }
.dd { margin: 0 12px 0 9px; flex: none; }
.dd svg { width: 24px; height: 18px; }
.color { display: flex; height: 22px; }
.color button { border: 1px solid #a9a9a9; border-radius: 3px; background: linear-gradient(#fff, #ececec); width: 12px; display: grid; place-items: center; }
.color button:first-child { flex: 1; padding: 3px 4px; place-items: stretch; }
.color i { display: block; height: 14px; border-radius: 3px; background: #b2df8a; }
.color .clear { background: repeating-conic-gradient(#d0d0d0 0 25%, #fff 0 50%) 0 0 / 8px 8px; }
.marked::before { content: ""; position: absolute; inset: 1px 39px 2px 4px; border: 2px solid #e81515; pointer-events: none; }
.solid { width: 32px; height: 16px; background: #646464; margin-left: 5px; }
.solid.ln { height: 2px; background: #000; }
.join svg { width: 15px; height: 15px; margin-left: 5px; }
.pair { display: flex; gap: 6px; }
.pair .spin { flex: 1; }
.pair .combo { width: 103px; height: 22px; }
.spin { display: flex; align-items: center; height: 22px; background: #fff; border: 1px solid #a9a9a9; border-radius: 3px; min-width: 0; }
.spin input { flex: 1; min-width: 0; width: 0; padding-left: 4px; outline: 0; }
.clr { width: 13px; height: 10px; margin-right: 10px; }
.steps { width: 14px; height: 100%; flex: none; display: flex; flex-direction: column; align-items: center; justify-content: center; gap: 4px; border-left: 1px solid #b5b5b5; background: linear-gradient(#fff, #eee); }
.formwrap .vbar i { height: 133px; }
.foot { display: flex; align-items: center; height: 38px; flex: none; gap: 6px; padding-top: 8px; }
.foot .sq { width: 24px; }
.foot label { display: flex; align-items: center; gap: 5px; margin-left: auto; }
.apply { width: 80px; height: 22px; margin-left: 6px; }

.status { height: 28px; flex: none; display: flex; align-items: center; padding-left: 4px; padding-top: 1px; }
.status label { flex: none; }
.status > input, .search, .scalebox { height: 22px; background: #fff; border: 1px solid #a9a9a9; border-radius: 3px; }
.search { flex: 0 1 200px; min-width: 0; display: flex; align-items: center; gap: 6px; padding-left: 7px; }
.search input { flex: 1; min-width: 0; outline: 0; }
.search input::placeholder { color: #888; opacity: 1; }
.search svg { width: 14px; height: 14px; }
.coord { width: 44px; margin-left: 36px; white-space: nowrap; }
#co { width: 98px; padding: 0 6px; }
.bug { margin: 0 11px 0 4px; }
.scale { width: 17px; }
.scalebox { width: 81px; flex: none; display: flex; padding-left: 3px; }
.scalebox input { flex: 1; min-width: 0; outline: 0; }
.scalebox button { width: 20px; display: grid; place-items: center; border-left: 1px solid #b5b5b5; }
.lock { margin: 0 5px 0 10px; }
.mg { width: 35px; white-space: nowrap; }
.w88 { width: 88px; flex: none; }
.rt { width: 38px; padding-left: 8px; white-space: nowrap; }
.status .w84 { width: 85px; flex: none; margin-left: 8px; }
.hbar .rt { width: 0; padding: 0; }
.render { display: flex; align-items: center; gap: 4px; margin-left: 6px; }
.crs { display: flex; align-items: center; gap: 3px; margin-left: 16px; }
.crs svg { width: 15px; height: 15px; }
.msg { margin-left: auto; margin-right: 21px; }
.msg svg { width: 16px; height: 16px; }
.corner { width: 9px; height: 9px; align-self: flex-end; background: radial-gradient(circle at 1px 1px, #999 1px, transparent 1px) 0 0 / 3px 3px; clip-path: polygon(100% 0, 100% 100%, 0 100%); }
```

FILE: tracts.js
```js
// Dominant population class per 20-unit cell: d < g < y < o < r.
const classes = [
  "ddgygdddddddddddddddd",
  "gyyorgddddddddddddddd",
  "yooryddoygddddddddddd",
  "rodroyyddgggddddddddd",
  "oodrooyyrgoyggydddddg",
  "dddgggygrroggyogryyyg",
  "dgddggorrooroorooddoo",
  "dyooyorrrrgyogyoddyyo",
  "ddroygorrryoodooyyggg",
  "dddygoorrrryyggddgddg",
  "ddddyroorrrooogyyyggd",
  "ddddyogrorrooyoyyoygd",
  "ddddyorgyoryyooorrggd",
  "dddggyrdrryyydooryoyd",
  "dddgydodgrgydgoorryog",
  "ddddggrgdddddyogrgyoy",
  "dddddddddddddgyyygoog",
  "ddddddddddddddgrogydg",
  "dddddddddddddddgygddg",
  "dddddddddddddddggyddg",
  "dddddddddddddddddddgg",
  "ddddddddddddddddddddg"
];
const order = "dgyor";
let seed = 20177;
const rnd = () => {
  seed = (seed * 1664525 + 1013904223) % 4294967296;
  return seed / 4294967296;
};

function classAt(x, y) {
  const col = Math.floor((x - 176 + (rnd() - .5) * 12) / 20);
  const row = Math.floor((y - 168 + (rnd() - .5) * 12) / 20);
  const line = classes[Math.max(0, Math.min(row, classes.length - 1))];
  const base = order.indexOf(line[Math.max(0, Math.min(col, 20))]);
  if (base < 1) return rnd() < .75 ? 0 : 1;
  const p = rnd();
  if (p < (base === 4 ? .8 : .56)) return base;
  const shift = base === 4 || p < .8 ? -1 : 1;
  return Math.max(1, Math.min(4, base + shift));
}

// A gentle warp keeps blocks contiguous while bending the street grid.
const warp = (x, y) => [
  (x + 3 * Math.sin(y / 23) + Math.sin((x + y) / 9)).toFixed(1),
  (y + 3 * Math.sin(x / 29) + Math.cos((x - y) / 11)).toFixed(1)
].join(" ");

const paths = ["", "", "", "", ""];
// Neighbouring tracts often share a class, so a block may pass its class on.
function split(x, y, w, h, inherited) {
  const long = Math.max(w, h);
  let c = inherited;
  if (c === undefined && long < 14 && rnd() < .4) c = classAt(x + w / 2, y + h / 2);
  if (long < 5 || (long < 10 && rnd() < .4)) {
    if (c === undefined) c = classAt(x + w / 2, y + h / 2);
    paths[c] += `M${warp(x, y)}L${warp(x + w, y)}L${warp(x + w, y + h)}L${warp(x, y + h)}Z`;
    return;
  }
  const cut = Math.round(long * (.3 + rnd() * .4));
  if (w > h) { split(x, y, cut, h, c); split(x + cut, y, w - cut, h, c); }
  else { split(x, y, w, cut, c); split(x, y + cut, w, h - cut, c); }
}
split(165, 160, 445, 450);

const group = document.getElementById("tracts");
paths.forEach((d, i) => {
  const p = document.createElementNS("http://www.w3.org/2000/svg", "path");
  p.setAttribute("class", "t" + i);
  p.setAttribute("d", d);
  group.append(p);
});
```
